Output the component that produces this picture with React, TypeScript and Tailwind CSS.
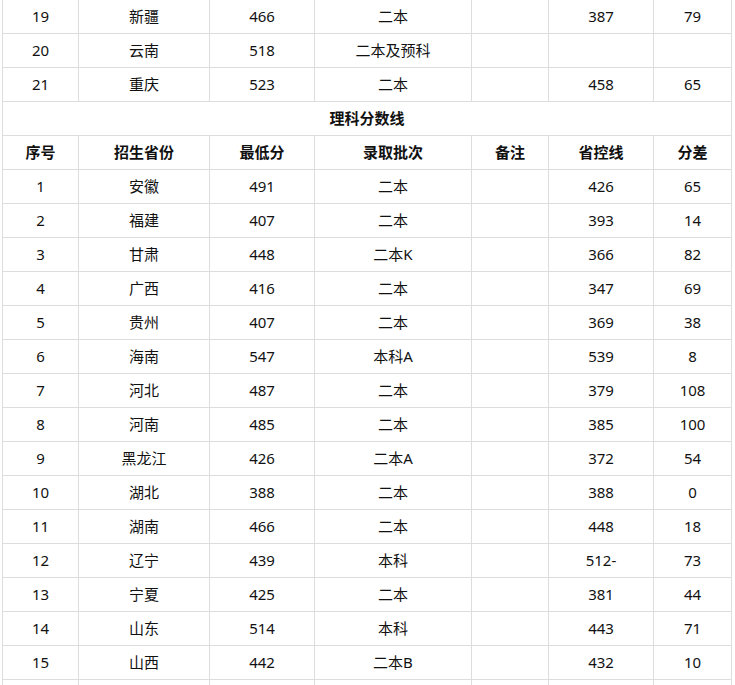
const topRows = [
  ["19", "新疆", "466", "二本", "", "387", "79"],
  ["20", "云南", "518", "二本及预科", "", "", ""],
  ["21", "重庆", "523", "二本", "", "458", "65"],
];

const header = ["序号", "招生省份", "最低分", "录取批次", "备注", "省控线", "分差"];

const scienceRows = [
  ["1", "安徽", "491", "二本", "", "426", "65"],
  ["2", "福建", "407", "二本", "", "393", "14"],
  ["3", "甘肃", "448", "二本K", "", "366", "82"],
  ["4", "广西", "416", "二本", "", "347", "69"],
  ["5", "贵州", "407", "二本", "", "369", "38"],
  ["6", "海南", "547", "本科A", "", "539", "8"],
  ["7", "河北", "487", "二本", "", "379", "108"],
  ["8", "河南", "485", "二本", "", "385", "100"],
  ["9", "黑龙江", "426", "二本A", "", "372", "54"],
  ["10", "湖北", "388", "二本", "", "388", "0"],
  ["11", "湖南", "466", "二本", "", "448", "18"],
  ["12", "辽宁", "439", "本科", "", "512-", "73"],
  ["13", "宁夏", "425", "二本", "", "381", "44"],
  ["14", "山东", "514", "本科", "", "443", "71"],
  ["15", "山西", "442", "二本B", "", "432", "10"],
  ["", "", "", "", "", "", ""],
];

const widths = ["w-[76px]", "w-[131px]", "w-[105px]", "w-[157px]", "w-[77px]", "w-[105px]", "w-[78px]"];

function Row({ cells, bold }: { cells: string[]; bold?: boolean }) {
  return (
    <tr>
      {cells.map((c, i) => (
        <td
          key={i}
          className={`h-[34px] border border-[#dddddd] p-0 pb-[2px] text-center align-middle ${bold ? "font-bold" : ""}`}
        >
          {c}
        </td>
      ))}
    </tr>
  );
}

export default function App() {
  return (
    <div className="h-[685px] w-[735px] overflow-hidden bg-white">
      <table
        className="-mt-px ml-[2px] w-[730px] table-fixed border-collapse text-[15px] leading-[20px] text-[#111]"
        style={{ fontFamily: '"Noto Sans", "Noto Sans CJK SC", sans-serif' }}
      >
        <colgroup>
          {widths.map((w, i) => (
            <col key={i} className={w} />
          ))}
        </colgroup>
        <tbody>
          {topRows.map((r) => (
            <Row key={r[0]} cells={r} />
          ))}
          <tr>
            <td colSpan={7} className="h-[34px] border border-[#dddddd] p-0 pb-[2px] text-center align-middle font-bold">
              理科分数线
            </td>
          </tr>
          <Row cells={header} bold />
          {scienceRows.map((r, i) => (
            <Row key={i} cells={r} />
          ))}
        </tbody>
      </table>
    </div>
  );
}
